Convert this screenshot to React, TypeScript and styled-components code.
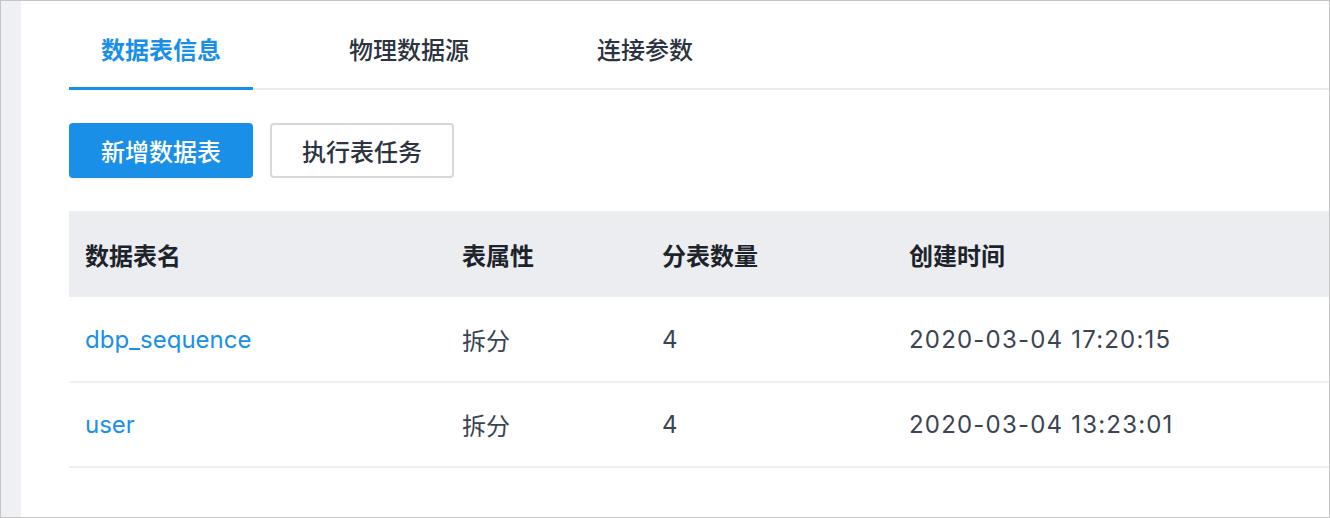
import React, { useState } from 'react'
import styled, { createGlobalStyle } from 'styled-components'

const GlobalStyle = createGlobalStyle`
    html, body {
        margin: 0;
        padding: 0;
        background: #ffffff;
    }
    * {
        box-sizing: border-box;
    }
`

const FONT = `Inter, "Noto Sans CJK SC", "Noto Sans", sans-serif`
const BLUE = '#1a8fe8'

const Frame = styled.div`
    width: 1330px;
    height: 518px;
    border: 1px solid #c4c4c4;
    display: flex;
    font-family: ${FONT};
    overflow: hidden;
`

const Side = styled.div`
    width: 20px;
    flex: none;
    background: #eef0f4;
`

const Main = styled.div`
    flex: 1;
    background: #ffffff;
    padding-left: 48px;
`

const TabBar = styled.div`
    display: flex;
    gap: 64px;
    border-bottom: 2px solid #e9ebee;
`

const Tab = styled.div<{ $active?: boolean }>`
    padding: 33px 32px 19px;
    line-height: 34px;
    font-size: 24px;
    font-weight: ${p => (p.$active ? 700 : 500)};
    color: ${p => (p.$active ? BLUE : '#2b3440')};
    border-bottom: 3px solid ${p => (p.$active ? BLUE : 'transparent')};
    margin-bottom: -2px;
    cursor: pointer;
`

const Actions = styled.div`
    display: flex;
    gap: 17px;
    margin-top: 33px;
`

const Button = styled.button<{ $primary?: boolean }>`
    width: 184px;
    height: 55px;
    border-radius: 4px;
    font-family: ${FONT};
    font-size: 24px;
    font-weight: 500;
    cursor: pointer;
    background: ${p => (p.$primary ? BLUE : '#ffffff')};
    color: ${p => (p.$primary ? '#ffffff' : '#2b3440')};
    border: ${p => (p.$primary ? 'none' : '2px solid #d5d8dc')};
    box-shadow: ${p => (p.$primary ? '0 2px 0 rgba(0, 0, 0, 0.04)' : 'none')};
`

const Table = styled.table`
    width: 100%;
    margin-top: 33px;
    border-collapse: collapse;
    table-layout: fixed;
    font-size: 24px;

    th {
        background: #ebedf0;
        height: 86px;
        padding: 0 16px;
        text-align: left;
        font-weight: 600;
        color: #1d232b;
    }

    td {
        height: 85px;
        padding: 0 16px;
        color: #3a4452;
        border-bottom: 2px solid #eeeff1;
    }
`

const TableLink = styled.a`
    color: ${BLUE};
    text-decoration: none;
`

const DateText = styled.span`
    letter-spacing: 1.2px;
`

interface IRow {
    name: string
    type: string
    shards: number
    createdAt: string
}

const rows: Array<IRow> = [
    { name: 'dbp_sequence', type: '拆分', shards: 4, createdAt: '2020-03-04 17:20:15' },
    { name: 'user', type: '拆分', shards: 4, createdAt: '2020-03-04 13:23:01' }
]

const tabs: Array<string> = ['数据表信息', '物理数据源', '连接参数']

const App: React.FC = () => {
    const [active, setActive] = useState<number>(0)

    return (
        <>
            <GlobalStyle />
            <Frame>
                <Side />
                <Main>
                    <TabBar>
                        {tabs.map((t, k) => (
                            <Tab key={k} $active={k === active} onClick={() => setActive(k)}>
                                {t}
                            </Tab>
                        ))}
                    </TabBar>
                    <Actions>
                        <Button $primary>新增数据表</Button>
                        <Button>执行表任务</Button>
                    </Actions>
                    <Table>
                        <colgroup>
                            <col style={{ width: 377 }} />
                            <col style={{ width: 200 }} />
                            <col style={{ width: 247 }} />
                            <col />
                        </colgroup>
                        <thead>
                            <tr>
                                <th>数据表名</th>
                                <th>表属性</th>
                                <th>分表数量</th>
                                <th>创建时间</th>
                            </tr>
                        </thead>
                        <tbody>
                            {rows.map((r, k) => (
                                <tr key={k}>
                                    <td>
                                        <TableLink href='#' onClick={e => e.preventDefault()}>{r.name}</TableLink>
                                    </td>
                                    <td>{r.type}</td>
                                    <td>{r.shards}</td>
                                    <td><DateText>{r.createdAt}</DateText></td>
                                </tr>
                            ))}
                        </tbody>
                    </Table>
                </Main>
            </Frame>
        </>
    )
}

export default App
